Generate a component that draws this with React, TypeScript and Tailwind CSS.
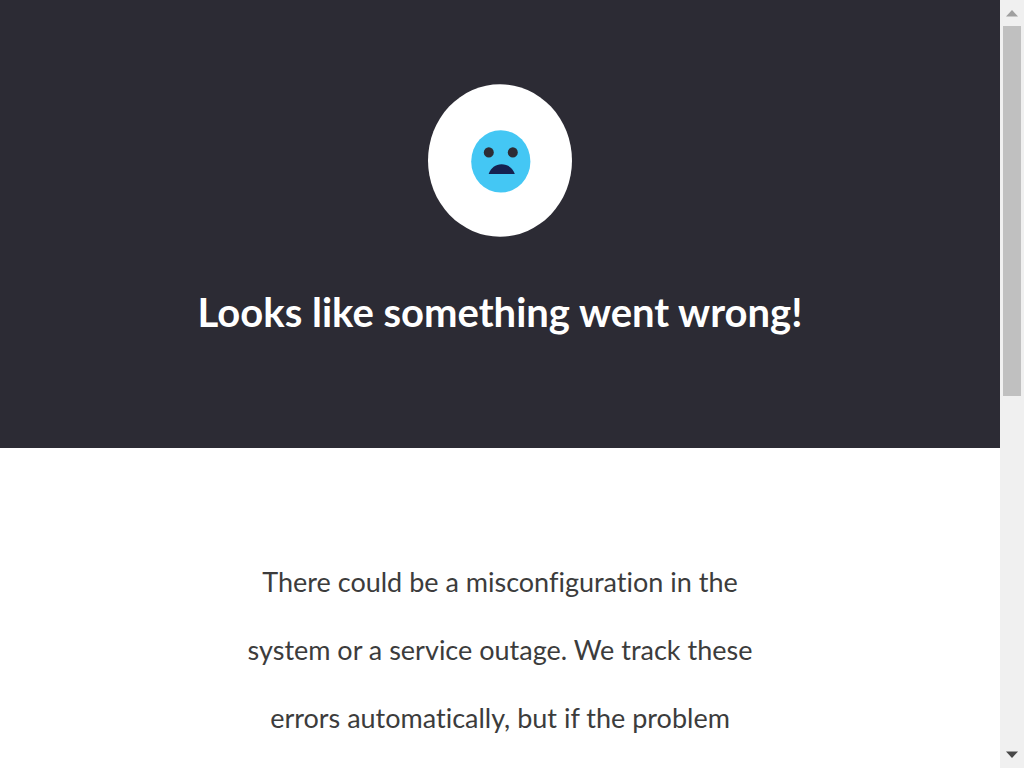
function SadFace() {
  return (
    <svg viewBox="0 0 144 153" className="h-[153px] w-36" role="img" aria-label="Sad face">
      <ellipse cx="72" cy="76.500" rx="72" ry="76.200" fill="#ffffff" />
      <ellipse cx="72.800" cy="77.400" rx="29.6" ry="31.2" fill="#44c7f4" />
      <ellipse cx="60.800" cy="68.400" rx="5" ry="5.2" fill="#2d2c35" />
      <ellipse cx="84.800" cy="68.400" rx="5" ry="5.2" fill="#2d2c35" />
      <path d="M60.6 90C63 83.6 67.5 80.200 73.5 80.200S84.500 83.600 86.800 90Z" fill="#152150" />
    </svg>
  );
}

function ScrollBar() {
  return (
    <div className="flex w-6 shrink-0 flex-col bg-[#f0f0f0]" aria-hidden="true">
      <div className="flex h-[26px] shrink-0 items-center justify-center">
        <svg viewBox="0 0 12 8" className="h-2 w-3">
          <path d="M0 7.500 6 1l6 6.500Z" fill="#a0a0a0" />
        </svg>
      </div>
      <div className="flex grow flex-col items-center">
        <div className="h-[370px] w-[18px] bg-[#c0c0c0]" />
      </div>
      <div className="flex h-[26px] shrink-0 items-center justify-center">
        <svg viewBox="0 0 12 8" className="h-2 w-3">
          <path d="M0 .5 6 7l6-6.500Z" fill="#484848" />
        </svg>
      </div>
    </div>
  );
}

export default function App() {
  return (
    <div className="flex h-screen overflow-hidden bg-white font-['Lato',sans-serif] [font-variant-ligatures:none]">
      <main className="min-w-0 grow overflow-hidden">
        <header className="flex flex-col items-center bg-[#2c2b34] px-6 pt-[84px] pb-[104px] text-center text-white">
          <SadFace />
          <h1 className="mt-[43px] text-[40px] leading-16 font-bold">Looks like something went wrong!</h1>
        </header>
        <section className="px-6 pt-[100px]">
          <p className="mx-auto max-w-[510px] text-center text-[27px] leading-[68px] text-[#3c3c3c]">
            There could be a misconfiguration in the system or a service outage. We track these errors
            automatically, but if the problem
          </p>
        </section>
      </main>
      <ScrollBar />
    </div>
  );
}
